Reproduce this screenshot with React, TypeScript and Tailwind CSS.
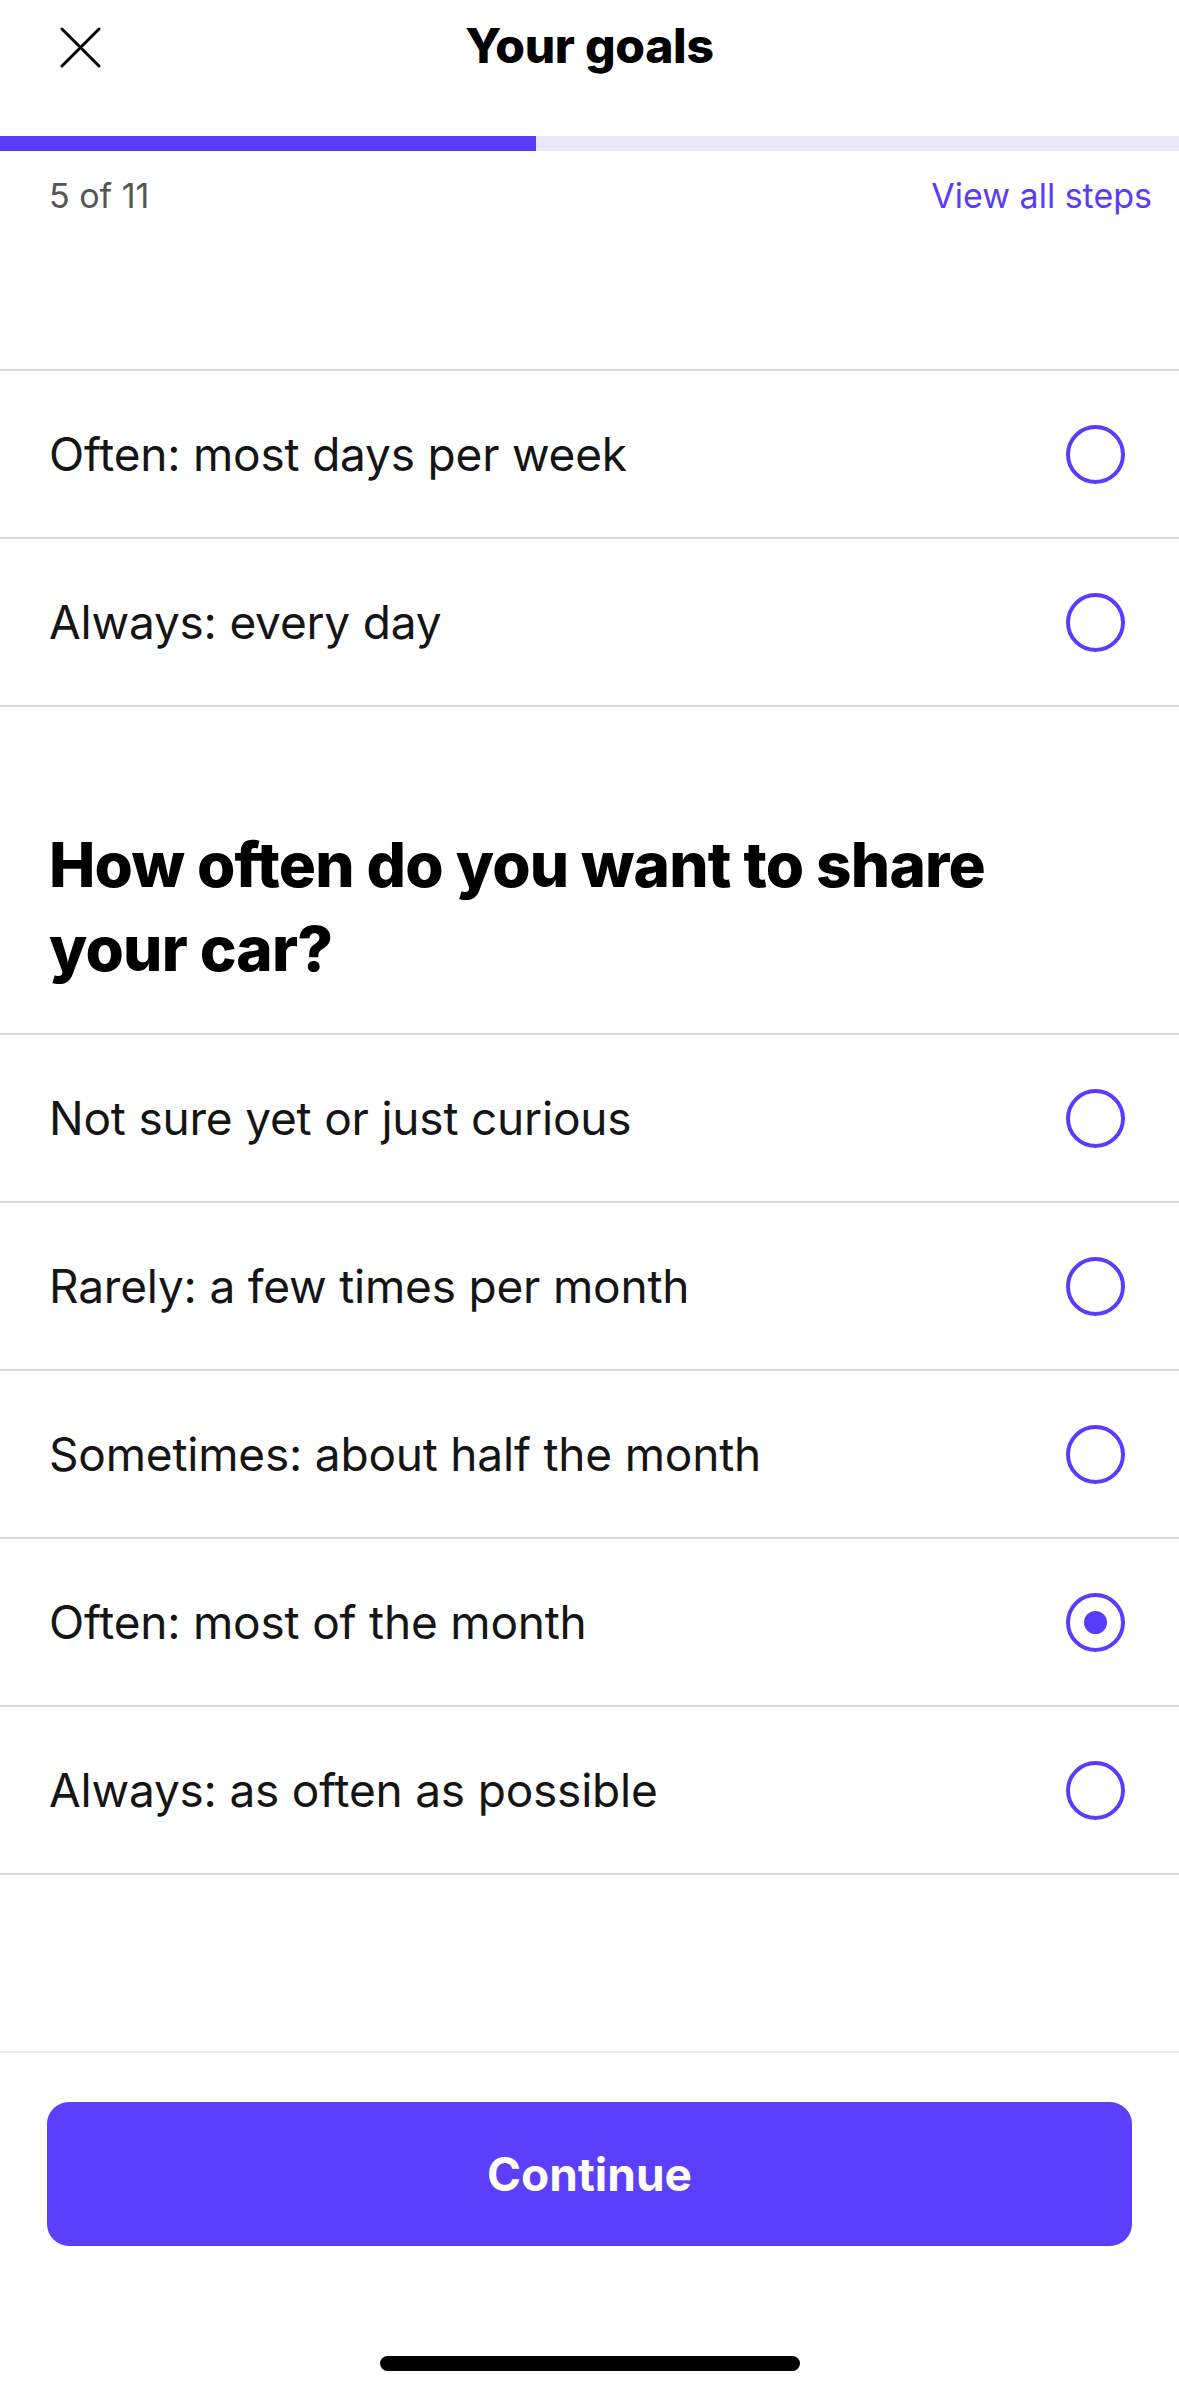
const firstOptions = ['Often: most days per week', 'Always: every day'];

const shareOptions = [
  'Not sure yet or just curious',
  'Rarely: a few times per month',
  'Sometimes: about half the month',
  'Often: most of the month',
  'Always: as often as possible',
];

function Radio({ checked }: { checked?: boolean }) {
  return (
    <div className="w-[59px] h-[59px] rounded-full border-[4px] border-[#593CFB] flex items-center justify-center shrink-0">
      {checked && <div className="w-[23px] h-[23px] rounded-full bg-[#593CFB]" />}
    </div>
  );
}

function OptionRow({ label, checked }: { label: string; checked?: boolean }) {
  return (
    <div className="h-[168px] border-b-2 border-[#d9d9d9] flex items-center justify-between pl-[49px] pr-[54px]">
      <span className="text-[46px] text-[#151515] tracking-[-0.2px]">{label}</span>
      <Radio checked={checked} />
    </div>
  );
}

export default function App() {
  const selected = 'Often: most of the month';

  return (
    <div
      className="w-[1179px] h-[2396px] bg-white flex flex-col overflow-hidden"
      style={{ fontFamily: 'Inter, "Liberation Sans", sans-serif' }}
    >
      {/* Header */}
      <div className="h-[136px] relative flex items-start justify-center pt-[14px]">
        <button className="absolute left-[60px] top-[27px] text-black">
          <svg width="41" height="41" viewBox="0 0 41 41" fill="none" stroke="currentColor" strokeWidth="3" strokeLinecap="round">
            <path d="M2 2L39 39M39 2L2 39" />
          </svg>
        </button>
        <h1 className="text-[48px] leading-[64px] font-extrabold text-black tracking-[-0.3px]">Your goals</h1>
      </div>

      {/* Progress */}
      <div className="h-[15px] bg-[#ece6fb] flex">
        <div className="w-[536px] h-full bg-[#593CFB]" />
      </div>
      <div className="h-[90px] flex items-start justify-between pl-[49px] pr-[27px] pt-[25px]">
        <span className="text-[34px] leading-[40px] text-[#555555]">5 of 11</span>
        <span className="text-[34px] leading-[40px] text-[#593CFB]">View all steps</span>
      </div>

      {/* Scrolled list */}
      <div className="flex-1 flex flex-col">
        <div className="h-[130px] border-b-2 border-[#d9d9d9]" />
        {firstOptions.map((o) => (
          <OptionRow key={o} label={o} />
        ))}

        <div className="h-[328px] border-b-2 border-[#d9d9d9] pl-[49px] pr-[160px] pt-[116px]">
          <h2 className="text-[62px] leading-[84px] font-extrabold text-black tracking-[-0.8px]">
            How often do you want to share your car?
          </h2>
        </div>
        {shareOptions.map((o) => (
          <OptionRow key={o} label={o} checked={o === selected} />
        ))}
      </div>

      {/* Footer */}
      <div className="h-[345px] border-t-2 border-[#ececec] flex flex-col items-center">
        <div className="w-full px-[47px] pt-[49px]">
          <button className="w-full h-[144px] rounded-[22px] bg-[#5B3FFA] text-white text-[46px] font-bold">
            Continue
          </button>
        </div>
        <div className="mt-[110px] w-[420px] h-[15px] rounded-full bg-black" />
      </div>
    </div>
  );
}
